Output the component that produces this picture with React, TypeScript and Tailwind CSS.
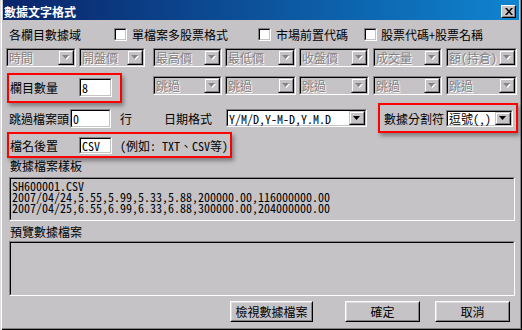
import React from "react";

const F = "[font-family:'Noto_Sans_Mono_CJK_TC','Noto_Sans_CJK_TC',sans-serif]";

function Sunken({ cls, inner, children }: { cls: string; inner: string; children?: React.ReactNode }) {
  return (
    <div className={`border border-t-[#848284] border-l-[#848284] border-b-white border-r-white ${cls}`}>
      <div className={`h-full w-full border border-t-black border-l-black border-b-[#c6c3c6] border-r-[#c6c3c6] ${inner}`}>
        {children}
      </div>
    </div>
  );
}

function Arrow({ disabled }: { disabled?: boolean }) {
  return (
    <svg width="8" height="5" viewBox="0 0 8 5" className="block">
      {disabled && <path d="M1 1h7L4.5 5z" fill="#fff" />}
      <path d="M0 0h7L3.5 4z" fill={disabled ? "#848284" : "#000"} />
    </svg>
  );
}

function DropBtn({ disabled }: { disabled?: boolean }) {
  return (
    <div className="w-[16px] h-full shrink-0 border border-t-[#c6c3c6] border-l-[#c6c3c6] border-b-black border-r-black">
      <div className="w-full h-full border border-t-white border-l-white border-b-[#848284] border-r-[#848284] bg-[#c6c3c6] flex items-center justify-center">
        <Arrow disabled={disabled} />
      </div>
    </div>
  );
}

function Combo({ cls, text, disabled }: { cls: string; text: string; disabled?: boolean }) {
  return (
    <Sunken cls={cls} inner={`flex items-stretch ${disabled ? "bg-[#c6c3c6]" : "bg-white"}`}>
      <span
        className={`flex-1 pl-[1px] flex items-center whitespace-nowrap ${
          disabled ? "text-[#848284] [text-shadow:1px_1px_0_#fff]" : "text-black"
        }`}
      >
        {text}
      </span>
      <DropBtn disabled={disabled} />
    </Sunken>
  );
}

function Check() {
  return <Sunken cls="w-[13px] h-[13px] shrink-0" inner="bg-white" />;
}

function Input({ cls, text }: { cls: string; text: string }) {
  return (
    <Sunken cls={cls} inner="bg-white flex items-center pl-[1px]">
      <span>{text}</span>
    </Sunken>
  );
}

function Button({ cls, text }: { cls: string; text: string }) {
  return (
    <div className={`border border-t-white border-l-white border-b-black border-r-black ${cls}`}>
      <div className="w-full h-full border border-t-[#dedbde] border-l-[#dedbde] border-b-[#848284] border-r-[#848284] flex items-center justify-center">
        {text}
      </div>
    </div>
  );
}

const red = "border-2 border-[#ff0000] shadow-[2px_3px_4px_rgba(0,0,0,0.35)]";

export default function App() {
  return (
    <div
      className={`w-[522px] h-[330px] bg-[#c6c3c6] text-[12px] leading-[15px] text-black ${F} flex flex-col overflow-hidden shadow-[inset_1px_0_0_#dedbde,inset_2px_0_0_#fff,inset_-1px_-1px_0_#000,inset_-2px_-2px_0_#848284]`}
    >
      {/* Title bar */}
      <div className="mx-[3px] h-[20px] shrink-0 flex items-center bg-linear-to-r from-[#0a246a] to-[#1084d0]">
        <span className="pl-[1px] pt-[2px] text-white font-bold">數據文字格式</span>
        <div className="ml-auto mr-[3px] mt-[2px] w-[15px] h-[13px] border border-t-white border-l-white border-b-black border-r-black">
          <div className="w-full h-full border border-t-[#c6c3c6] border-l-[#c6c3c6] border-b-[#848284] border-r-[#848284] bg-[#c6c3c6] flex items-center justify-center">
            <svg width="8" height="7" viewBox="0 0 8 7" className="block">
              <path d="M0 0h2l2 2.5L6 0h2L5 3.5 8 7H6L4 4.5 2 7H0l3-3.5z" fill="#000" />
            </svg>
          </div>
        </div>
      </div>

      {/* Row A: checkboxes */}
      <div className="mt-[6px] h-[16px] flex items-center whitespace-nowrap">
        <span className="ml-[9px] w-[105px]">各欄目數據域</span>
        <Check />
        <span className="ml-[5px] w-[126px]">單檔案多股票格式</span>
        <Check />
        <span className="ml-[5px] w-[88px]">市場前置代碼</span>
        <Check />
        <span className="ml-[4px]">股票代碼+股票名稱</span>
      </div>

      {/* Row B: column combos */}
      <div className="mt-[6px] h-[19px] flex">
        <Combo cls="ml-[6px] w-[70px] h-[19px]" text="時間" disabled />
        <Combo cls="ml-[3px] w-[66px] h-[19px]" text="開盤價" disabled />
        <Combo cls="ml-[8px] w-[69px] h-[19px]" text="最高價" disabled />
        <Combo cls="ml-[3px] w-[71px] h-[19px]" text="最低價" disabled />
        <Combo cls="ml-[3px] w-[70px] h-[19px]" text="收盤價" disabled />
        <Combo cls="ml-[4px] w-[69px] h-[19px]" text="成交量" disabled />
        <Combo cls="ml-[4px] w-[71px] h-[19px]" text="額(持倉)" disabled />
      </div>

      {/* Row C */}
      <div className="mt-[6px] h-[30px] flex items-start">
        <div className={`ml-[7px] w-[115px] h-[30px] flex items-center pb-[2px] ${red}`}>
          <span className="pl-[1px] w-[70px] whitespace-nowrap">欄目數量</span>
          <Input cls="w-[33px] h-[19px]" text="8" />
        </div>
        <div className="mt-[3px] flex">
          <Combo cls="ml-[31px] w-[69px] h-[19px]" text="跳過" disabled />
          <Combo cls="ml-[3px] w-[71px] h-[19px]" text="跳過" disabled />
          <Combo cls="ml-[3px] w-[70px] h-[19px]" text="跳過" disabled />
          <Combo cls="ml-[4px] w-[69px] h-[19px]" text="跳過" disabled />
          <Combo cls="ml-[4px] w-[71px] h-[19px]" text="跳過" disabled />
        </div>
      </div>

      {/* Row D */}
      <div className="h-[30px] flex items-center whitespace-nowrap">
        <span className="ml-[9px] w-[61px] shrink-0">跳過檔案頭</span>
        <Input cls="w-[41px] h-[19px] shrink-0" text="0" />
        <span className="ml-[9px] w-[12px]">行</span>
        <span className="ml-[32px] w-[48px]">日期格式</span>
        <Combo cls="ml-[14px] w-[141px] h-[18px]" text="Y/M/D,Y-M-D,Y.M.D" />
        <div className={`ml-[11px] w-[140px] h-[30px] flex items-center ${red}`}>
          <span className="pl-[4px] w-[66px] shrink-0">數據分割符</span>
          <Combo cls="w-[67px] h-[17px] shrink-0" text="逗號(,)" />
        </div>
      </div>

      {/* Row E */}
      <div className="-mt-px h-[26px] flex">
        <div className={`ml-[7px] w-[225px] h-[26px] flex items-center ${red}`}>
          <span className="pl-[1px] w-[70px] whitespace-nowrap">檔名後置</span>
          <Input cls="w-[33px] h-[17px]" text="CSV" />
          <span className="ml-[8px] whitespace-nowrap">(例如: TXT、CSV等)</span>
        </div>
      </div>

      {/* Sample group */}
      <div className="h-[19px] ml-[10px]">數據檔案樣板</div>
      <Sunken cls="ml-[9px] w-[506px] h-[44px]" inner="bg-[#c6c3c6] pl-[1px] pt-[1px] leading-[11px] whitespace-pre">
        <div>SH600001.CSV</div>
        <div>2007/04/24,5.55,5.99,5.33,5.88,200000.00,116000000.00</div>
        <div>2007/04/25,6.55,6.99,6.33,6.88,300000.00,204000000.00</div>
      </Sunken>

      {/* Preview group */}
      <div className="h-[20px] pt-[3px] ml-[10px]">預覽數據檔案</div>
      <Sunken cls="ml-[9px] w-[506px] h-[55px]" inner="bg-[#c6c3c6]" />

      {/* Buttons */}
      <div className="mt-[5px] h-[21px] flex">
        <Button cls="ml-[230px] w-[83px] h-[21px]" text="檢視數據檔案" />
        <Button cls="ml-[32px] w-[75px] h-[21px]" text="確定" />
        <Button cls="ml-[15px] w-[75px] h-[21px]" text="取消" />
      </div>
    </div>
  );
}
